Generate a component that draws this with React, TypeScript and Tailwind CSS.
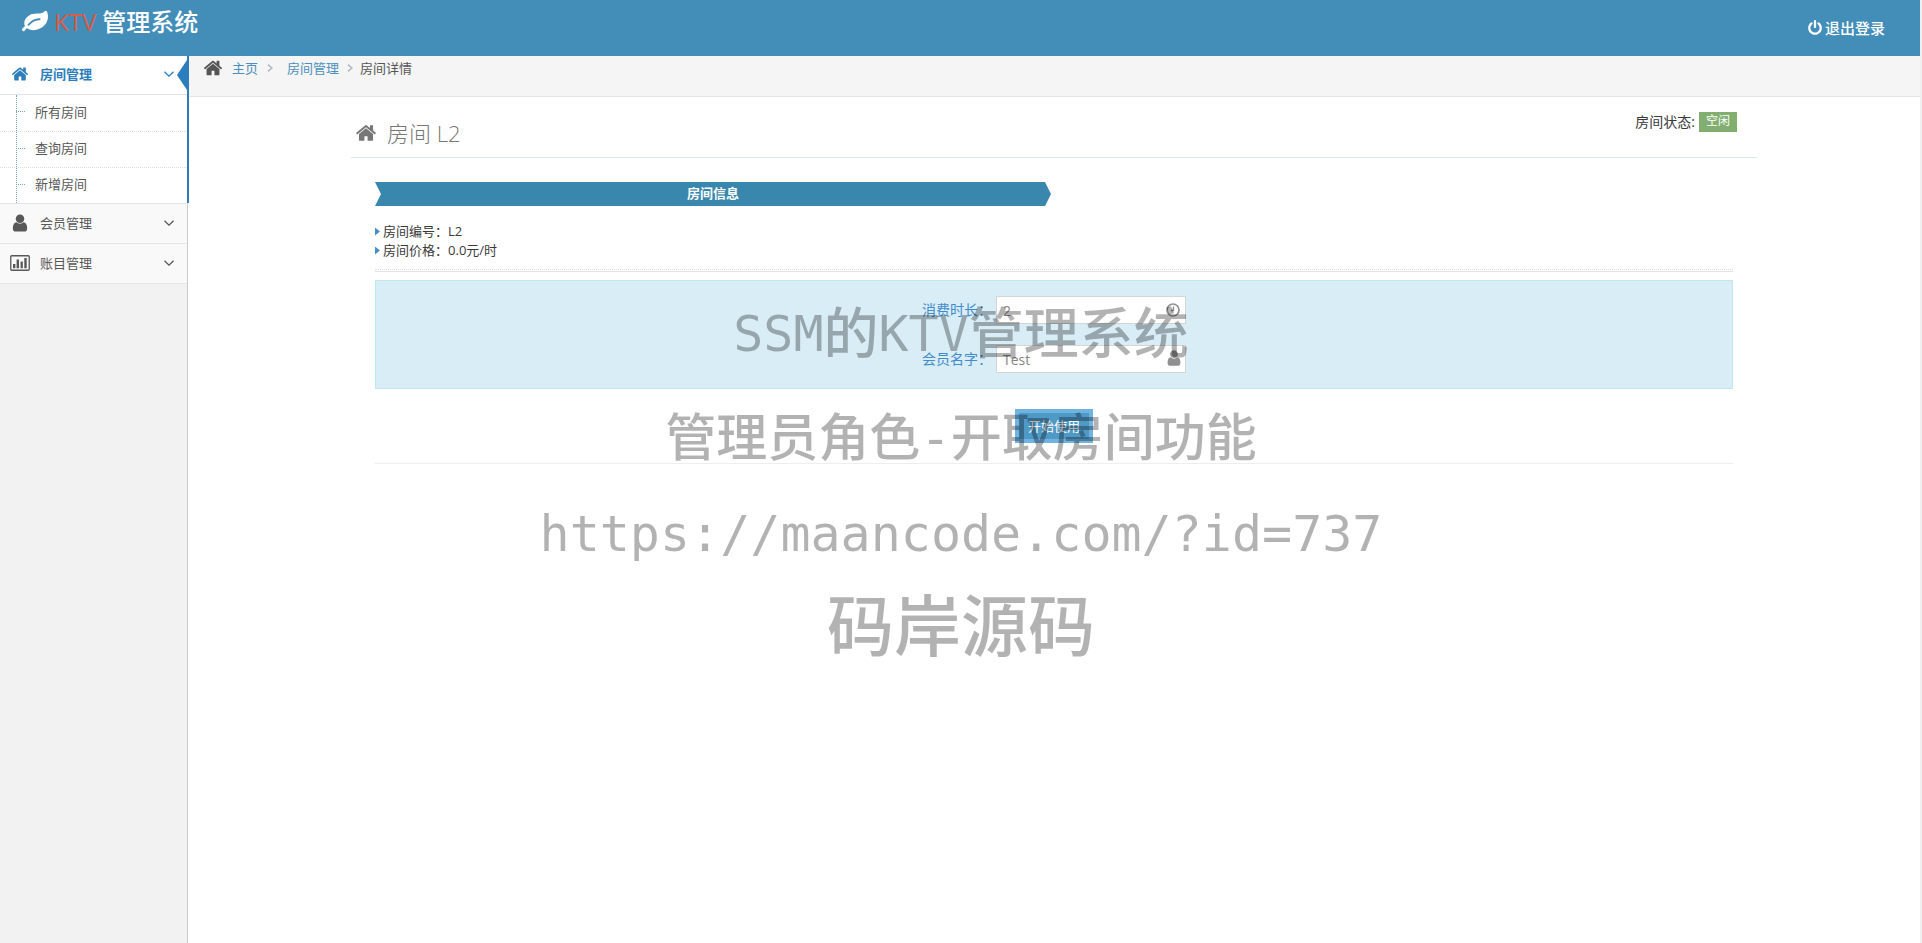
import React, { useState } from 'react';

const ICONS = {
    home: 'M1472 992v480q0 26-19 45t-45 19h-384v-384h-256v384h-384q-26 0-45-19t-19-45v-480q0-1 .5-3t.5-3l575-474 575 474q1 2 1 6zm223-69l-62 74q-8 9-21 11h-3q-13 0-21-7l-692-577-692 577q-12 8-24 7-13-2-21-11l-62-74q-8-10-7-23.5t11-21.5l719-599q32-26 76-26t76 26l244 204v-195q0-14 9-23t23-9h192q14 0 23 9t9 23v408l219 182q10 8 11 21.5t-7 23.5z',
    leaf: 'M1280 704q0-26-19-45t-45-19q-172 0-318 49.5t-259.5 134-235.5 219.5q-19 21-19 45 0 26 19 45t45 19q24 0 45-19 27-24 74-71t67-66q137-124 268.5-176t313.5-52q26 0 45-19t19-45zm512-198q0 95-20 193-46 224-184.5 383t-357.5 268q-214 108-438 108-148 0-286-47-15-5-88-42t-96-37q-16 0-39.5 32t-45 70-52.5 70-60 32q-43 0-63.5-17.5t-45.5-59.5q-2-4-6-11t-5.5-10-3-9.5-1.5-13.5q0-35 31-73.5t68-65.5 68-56 31-48q0-4-14-38t-16-44q-9-51-9-104 0-115 43.5-220t119-184.5 170.5-139 204-95.5q55-18 145-25.5t179.5-9 178.5-6 163.5-24 113.5-56.5l29.5-29.5t29.5-28 27-20 36.5-16 43.5-4.5q39 0 70.5 46t47.5 112 24 124 8 96z',
    power: 'M1664 896q0 156-61 298t-164 245-245 164-298 61-298-61-245-164-164-245-61-298q0-182 80.5-343t226.5-270q43-32 95.5-25t83.5 50q32 42 24.5 94.5t-49.5 84.5q-98 74-151.5 181t-53.5 228q0 104 40.5 198.5t109.5 163.5 163.5 109.5 198.5 40.5 198.5-40.5 163.5-109.5 109.5-163.5 40.5-198.5q0-121-53.5-228t-151.5-181q-42-32-49.5-84.5t24.5-94.5q31-43 84-50t95 25q146 109 226.5 270t80.5 343zm-640-768v640q0 52-38 90t-90 38-90-38-38-90v-640q0-52 38-90t90-38 90 38 38 90z',
    user: 'M1536 1399q0 109-62.5 187t-150.5 78h-854q-88 0-150.5-78t-62.5-187q0-85 8.5-160.5t31.5-152 58.5-131 94-89 134.5-34.5q131 128 313 128t313-128q76 0 134.5 34.5t94 89 58.5 131 31.5 152 8.5 160.5zm-256-887q0 159-112.5 271.5t-271.5 112.5-271.5-112.5-112.5-271.5 112.5-271.5 271.5-112.5 271.5 112.5 112.5 271.5z',
};

const Icon: React.FC<{ name: keyof typeof ICONS; className?: string }> = ({ name, className }) => (
    <svg viewBox="0 0 1792 1792" fill="currentColor" className={className} aria-hidden="true">
        <path d={ICONS[name]} />
    </svg>
);

const ChartIcon = () => (
    <svg viewBox="0 0 20 16" className="w-5 h-4" aria-hidden="true">
        <rect x="0.75" y="0.75" width="18.5" height="14.5" rx="1" fill="none" stroke="currentColor" strokeWidth="1.3" />
        <path d="M3 9h2.4v4.3H3zM6.6 4.5H9v8.8H6.6zM10.6 6.5h2.2v6.8h-2.2zM14.3 3h2.4v10.3h-2.4z" fill="currentColor" />
    </svg>
);

const ClockIcon = () => (
    <svg viewBox="0 0 14 14" className="w-[14px] h-[14px]" fill="none" stroke="currentColor" aria-hidden="true">
        <circle cx="7" cy="7" r="6" strokeWidth="1.7" />
        <path d="M7.5 3.5v4H5" strokeWidth="1.4" />
    </svg>
);

const AngleDown = () => (
    <svg viewBox="0 0 10 6" className="w-[10px] h-[6px]" fill="none" stroke="currentColor" strokeWidth="1.3" aria-hidden="true">
        <path d="M.5.7 5 5.1 9.5.7" />
    </svg>
);

const AngleRight = () => (
    <svg viewBox="0 0 6 8" className="w-[6px] h-2" fill="none" stroke="#b2b6bf" strokeWidth="1.5" aria-hidden="true">
        <path d="M1 .6 4.8 4 1 7.4" />
    </svg>
);

const ROOM_LINKS = ['所有房间', '查询房间', '新增房间'];

const ROOM_INFO = [
    { label: '房间编号', value: 'L2' },
    { label: '房间价格', value: '0.0元/时' },
];

const Navbar = () => (
    <header className="h-14 flex justify-between items-start bg-[#438eb9] text-white pl-[22px] pr-[35px]">
        <a href="#" className="flex items-center h-11 text-2xl font-normal">
            <Icon name="leaf" className="w-[26px] h-[26px] mr-[6px]" />
            <span className="text-[#dd5a43] mr-[6px]">KTV</span>
            <span className="font-medium">管理系统</span>
        </a>
        <a href="#" className="flex items-center gap-[2px] h-14 text-[15px] font-medium">
            <Icon name="power" className="w-4 h-4" />
            退出登录
        </a>
    </header>
);

const Sidebar = () => (
    <nav className="w-[188px] shrink-0 bg-[#f2f2f2] border-r border-[#ccc] text-[#585858]">
        {/* Open group, its blue bar covers the sidebar border */}
        <div className="relative bg-white border-b border-[#e5e5e5]">
            <span className="absolute top-0 bottom-0 -right-[2px] w-[2px] bg-[#2b7dbc]" />
            <button className="relative w-full h-[39px] flex items-center pl-[11px] pr-[13px] pb-[2px] border-b border-[#e5e5e5] text-[#2b7dbc] font-bold">
                <Icon name="home" className="w-[18px] h-[18px] mr-[11px]" />
                房间管理
                <span className="ml-auto"><AngleDown /></span>
                <span className="absolute right-0 top-1 w-[10px] h-[30px] bg-[#2b7dbc] [clip-path:polygon(100%_0,0_50%,100%_100%)]" />
            </button>
            <ul className="relative">
                <li className="absolute top-0 bottom-0 left-4 border-l border-dotted border-[#7aa7c7]" />
                {ROOM_LINKS.map((label, i) => (
                    <li key={label} className={`flex items-center h-9 pl-4 pb-[3px] ${i > 0 ? 'border-t border-dotted border-[#ddd]' : ''}`}>
                        <span className="w-[9px] border-t border-dotted border-[#7aa7c7] mr-[10px]" />
                        <a href="#">{label}</a>
                    </li>
                ))}
            </ul>
        </div>
        <button className="w-full h-10 flex items-center pl-[10px] pr-[13px] pb-[2px] bg-[#f9f9f9] border-b border-[#e5e5e5]">
            <Icon name="user" className="w-5 h-5 mr-[10px]" />
            会员管理
            <span className="ml-auto"><AngleDown /></span>
        </button>
        <button className="w-full h-10 flex items-center pl-[10px] pr-[13px] pb-[2px] bg-[#f9f9f9] border-b border-[#e5e5e5]">
            <span className="mr-[10px]"><ChartIcon /></span>
            账目管理
            <span className="ml-auto"><AngleDown /></span>
        </button>
    </nav>
);

const Breadcrumb = () => (
    <div className="h-[41px] flex items-start bg-[#f5f5f5] border-b border-[#e5e5e5] pl-[15px]">
        <div className="flex items-center h-6 text-[#4c8fbd]">
            <Icon name="home" className="w-5 h-5 mr-[9px] text-[#555]" />
            <a href="#">主页</a>
            <span className="ml-[9px] mr-[14px]"><AngleRight /></span>
            <a href="#">房间管理</a>
            <span className="ml-2 mr-[7px]"><AngleRight /></span>
            <span className="text-[#555]">房间详情</span>
        </div>
    </div>
);

// Site mark laid over the whole page
const Watermark = () => (
    <div className="absolute inset-x-0 top-[294px] flex flex-col items-center pointer-events-none text-black/30 whitespace-nowrap font-['DejaVu_Sans_Mono','Noto_Sans_CJK_SC',monospace]">
        <div className="h-20 flex items-center text-[50px] leading-none">
            SSM<span className="text-[55px] font-medium">的</span>KTV<span className="text-[55px] font-medium">管理系统</span>
        </div>
        <div className="h-32 flex items-center text-[51px] leading-none font-medium">管理员角色-开取房间功能</div>
        <div className="h-16 flex items-center text-[50px] leading-none">https://maancode.com/?id=737</div>
        <div className="h-[124px] flex items-center text-[67px] leading-none font-medium">码岸源码</div>
    </div>
);

export default function App() {
    const [hours, setHours] = useState('');
    const [member, setMember] = useState('');

    return (
        <div className="relative min-h-screen flex flex-col pr-[2px] bg-[#f0f0f0] text-[13px] leading-5 text-[#393939] font-['Open_Sans','Noto_Sans_CJK_SC',sans-serif]">
            <Navbar />
            <div className="flex-1 flex">
                <Sidebar />
                <main className="flex-1 bg-white">
                    <Breadcrumb />
                    <div className="grid grid-cols-12 px-2">
                        <div className="col-start-2 col-span-10 px-3">
                            <div className="h-[61px] flex items-start justify-between border-b border-[#dce8f1] pt-[14px] pl-1 pr-5">
                                <h3 className="flex items-center h-11 text-[22px] font-light text-[#777]">
                                    <Icon name="home" className="w-[22px] h-[22px] mr-[10px]" />
                                    房间 L2
                                </h3>
                                <div className="flex items-center gap-1 h-[22px] text-sm">
                                    房间状态:
                                    <span className="h-5 px-[7px] leading-[18px] text-xs bg-[#82af6f] text-white">空闲</span>
                                </div>
                            </div>

                            <div className="px-6 pt-6">
                                <div className="w-[calc(50%-3px)] h-6 bg-[#3a87ad] text-white font-bold text-center leading-[22px] [clip-path:polygon(0_0,calc(100%-6px)_0,100%_50%,calc(100%-6px)_100%,0_100%,6px_50%)]">
                                    房间信息
                                </div>
                                <ul className="mt-4 pb-[9px] border-b border-dotted border-[#ddd] leading-[19px]">
                                    {ROOM_INFO.map((item) => (
                                        <li key={item.label} className="flex items-center">
                                            <span className="w-[5px] h-2 mr-[3px] bg-[#478fca] [clip-path:polygon(0_0,100%_50%,0_100%)]" />
                                            {item.label}：{item.value}
                                        </li>
                                    ))}
                                </ul>
                                <hr className="mt-px border-[#e3e3e3]" />

                                <form onSubmit={(e) => e.preventDefault()}>
                                    <div className="mt-2 py-[15px] flex flex-col items-center gap-[21px] bg-[#d9edf7] border border-[#bce8f1] text-sm">
                                        <div className="flex items-center">
                                            <label htmlFor="hours" className="mr-1 text-[#428bca]">消费时长：</label>
                                            <div className="relative">
                                                <input
                                                    id="hours" placeholder="2" value={hours}
                                                    onChange={(e) => setHours(e.target.value)}
                                                    className="block w-[190px] h-7 pl-[6px] pr-6 bg-white border border-[#d5d5d5] placeholder:text-[#858585]"
                                                />
                                                <span className="absolute right-[6px] top-[7px] text-[#909090]"><ClockIcon /></span>
                                            </div>
                                        </div>
                                        <div className="flex items-center">
                                            <label htmlFor="member" className="mr-1 text-[#428bca]">会员名字：</label>
                                            <div className="relative">
                                                <input
                                                    id="member" placeholder="Test" value={member}
                                                    onChange={(e) => setMember(e.target.value)}
                                                    className="block w-[190px] h-7 pl-[6px] pr-6 bg-white border border-[#d5d5d5] placeholder:text-[#858585]"
                                                />
                                                <span className="absolute right-[3px] top-1 text-[#909090]"><Icon name="user" className="w-[18px] h-[18px]" /></span>
                                            </div>
                                        </div>
                                    </div>
                                    <button type="submit" className="block mx-auto mt-5 w-[78px] h-[34px] bg-[#4f99c6] border-4 border-[#6fb3e0] text-white leading-5">
                                        开始使用
                                    </button>
                                </form>
                                <hr className="mt-5 border-[#eee]" />
                            </div>
                        </div>
                    </div>
                </main>
            </div>
            <Watermark />
        </div>
    );
}
